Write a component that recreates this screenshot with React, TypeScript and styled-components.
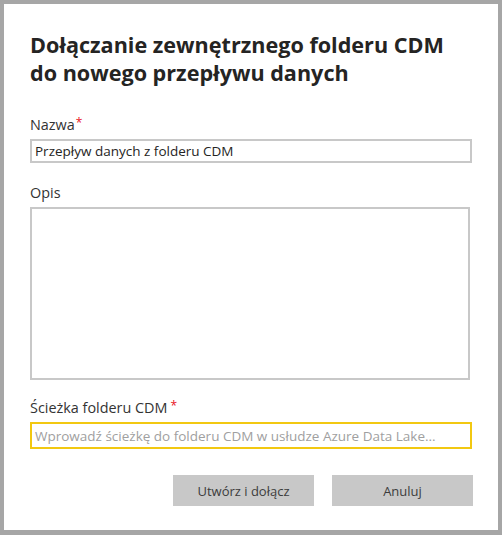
import React from 'react'
import styled, { createGlobalStyle } from 'styled-components'

const GlobalStyle = createGlobalStyle`
    html, body {
        margin: 0;
        padding: 0;
        background: #ffffff;
    }
    * {
        box-sizing: border-box;
    }
`

const App = () => {
    return (
        <>
            <GlobalStyle />
            <Frame>
                <Title>
                    Dołączanie zewnętrznego folderu CDM
                    <br />
                    do nowego przepływu danych
                </Title>
                <Field mt="28px">
                    <Label>
                        Nazwa<Required>*</Required>
                    </Label>
                    <TextInput defaultValue="Przepływ danych z folderu CDM" />
                </Field>
                <Field mt="20px">
                    <Label>Opis</Label>
                    <TextArea />
                </Field>
                <Field mt="18px">
                    <Label>
                        Ścieżka folderu CDM<Required gap="3px">*</Required>
                    </Label>
                    <TextInput tall highlight placeholder="Wprowadź ścieżkę do folderu CDM w usłudze Azure Data Lake..." />
                </Field>
                <Footer>
                    <Button>Utwórz i dołącz</Button>
                    <Button>Anuluj</Button>
                </Footer>
            </Frame>
        </>
    )
}

const Frame = styled.div`
    width: 502px;
    height: 535px;
    border: 4px solid #a6a6a6;
    border-bottom-width: 5px;
    background: #ffffff;
    padding: 27px 26px 0 26px;
    display: flex;
    flex-direction: column;
    font-family: "Open Sans", "Noto Sans", sans-serif;
`

const Title = styled.h1`
    margin: 0;
    font-size: 21.6px;
    line-height: 28px;
    font-weight: 700;
    color: #252423;
`

const Field = styled.div<{ mt: string }>`
    display: flex;
    flex-direction: column;
    margin-top: ${({ mt }) => mt};
`

const Label = styled.label`
    font-size: 14.4px;
    line-height: 20px;
    color: #333333;
    margin-bottom: 4px;
    display: flex;
    align-items: flex-start;
`

const Required = styled.span<{ gap?: string }>`
    color: #e81123;
    font-size: 12px;
    line-height: 16px;
    margin-left: ${({ gap }) => gap || '1px'};
`

const TextInput = styled.input<{ highlight?: boolean; tall?: boolean }>`
    width: 442px;
    height: ${({ tall }) => (tall ? '27px' : '24px')};
    border: 2px solid ${({ highlight }) => (highlight ? '#f2c811' : '#c8c8c8')};
    padding: 0 3px;
    font-family: inherit;
    font-size: 13.5px;
    color: #252423;
    outline: none;
    &::placeholder {
        color: #a0a0a0;
    }
`

const TextArea = styled.textarea`
    width: 440px;
    height: 173px;
    border: 2px solid #c8c8c8;
    resize: none;
    font-family: inherit;
    outline: none;
`

const Footer = styled.div`
    display: flex;
    justify-content: flex-end;
    gap: 18px;
    margin-top: 26px;
    margin-right: -1px;
`

const Button = styled.button`
    width: 141px;
    height: 31px;
    border: none;
    background: #c8c8c8;
    color: #3c3c3c;
    font-family: inherit;
    font-size: 13px;
    font-weight: 400;
    cursor: pointer;
`

export default App
